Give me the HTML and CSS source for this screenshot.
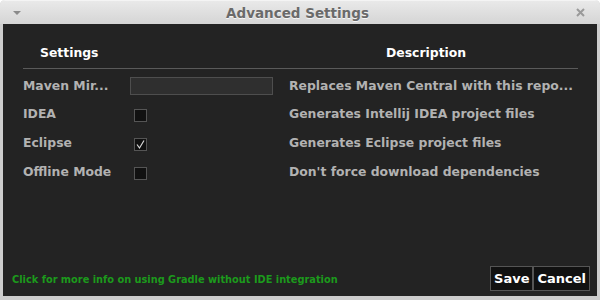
FILE: index.html
```html
<!DOCTYPE html>
<html lang="en">
<head>
  <meta charset="UTF-8" />
  <title>Advanced Settings</title>
  <link rel="stylesheet" href="styles.css">
</head>
<body>

  <div class="window">
    <!-- Title bar -->
    <div class="titlebar">
      <span class="menu-arrow"></span>
      <span class="title">Advanced Settings</span>
      <span class="close-btn">
        <svg width="9" height="9" viewBox="0 0 9 9"><path d="M1 1 L8 8 M8 1 L1 8" stroke="#9a9a9a" stroke-width="2"/></svg>
      </span>
    </div>

    <div class="content">
      <div class="table">
        <div class="head-row">
          <div class="head-settings">Settings</div>
          <div class="head-desc">Description</div>
        </div>

        <div class="row first">
          <div class="label">Maven Mir...</div>
          <div class="control"><div class="text-input"></div></div>
          <div class="desc">Replaces Maven Central with this repo...</div>
        </div>
        <div class="row">
          <div class="label">IDEA</div>
          <div class="control"><div class="checkbox"></div></div>
          <div class="desc">Generates Intellij IDEA project files</div>
        </div>
        <div class="row">
          <div class="label">Eclipse</div>
          <div class="control">
            <div class="checkbox">
              <svg width="11" height="11" viewBox="0 0 11 11"><path d="M2 5.5 L4.5 9 L9 1.5" fill="none" stroke="#d8d8d8" stroke-width="1.2"/></svg>
            </div>
          </div>
          <div class="desc">Generates Eclipse project files</div>
        </div>
        <div class="row">
          <div class="label">Offline Mode</div>
          <div class="control"><div class="checkbox"></div></div>
          <div class="desc">Don't force download dependencies</div>
        </div>
      </div>

      <div class="footer">
        <a class="info-link">Click for more info on using Gradle without IDE integration</a>
        <div class="buttons">
          <button class="btn">Save</button>
          <button class="btn">Cancel</button>
        </div>
      </div>
    </div>
  </div>

</body>
</html>
```

FILE: styles.css
```css
body {
  margin: 0;
  background-color: #ffffff;
  font-family: "DejaVu Sans", sans-serif;
  font-weight: bold;
}

.window {
  width: 600px;
  height: 300px;
  background-color: #cdcdcd;
  border-radius: 5px 5px 0 0;
  display: flex;
  flex-direction: column;
  overflow: hidden;
}

.titlebar {
  height: 24px;
  flex-shrink: 0;
  display: flex;
  align-items: center;
  background: linear-gradient(#e9e9e9, #d5d5d5);
  border-top: 1px solid #f4f4f4;
  box-sizing: border-box;
}

.menu-arrow {
  width: 0;
  height: 0;
  margin-left: 13px;
  margin-top: 1px;
  border-left: 4px solid transparent;
  border-right: 4px solid transparent;
  border-top: 4px solid #8a8a8a;
}

.title {
  flex: 1;
  text-align: center;
  font-size: 13.5px;
  color: #6a6a6a;
  text-shadow: 0 1px 0 #f5f5f5;
  margin-left: -2px;
}

.close-btn {
  margin-right: 15px;
  display: flex;
}

/* Dark dialog body */
.content {
  flex: 1;
  margin: 0 3px 4px 3px;
  background-color: #232323;
  display: flex;
  flex-direction: column;
}

.table {
  flex: 1;
  padding: 0 19px 0 20px;
  font-size: 12.4px;
}

.head-row {
  display: flex;
  padding-top: 21px;
  padding-bottom: 8px;
  border-bottom: 1px solid #5a5a5a;
  color: #ffffff;
}

.head-settings {
  width: 266px;
  padding-left: 17px;
  box-sizing: border-box;
}

.head-desc {
  padding-left: 97px;
}

.row {
  display: grid;
  grid-template-columns: 107px 159px 1fr;
  align-items: center;
  height: 28.6px;
  color: #b2b2b2;
}

.row.first {
  margin-top: 2px;
}

.control {
  display: flex;
}

.text-input {
  width: 141px;
  height: 16px;
  margin-top: 1px;
  border: 1px solid #4e4e4e;
  background-color: #2f2f2f;
}

.checkbox {
  width: 11px;
  height: 11px;
  margin-left: 4px;
  margin-top: 4px;
  border: 1px solid #555555;
  background-color: #111111;
  display: flex;
  align-items: center;
  justify-content: center;
}

.desc {
  white-space: nowrap;
}

.footer {
  display: flex;
  align-items: flex-end;
  justify-content: space-between;
  padding: 0 7px 5px 9px;
}

.info-link {
  font-size: 9.8px;
  color: #1c9a1c;
  margin-bottom: 6px;
  cursor: pointer;
}

.buttons {
  display: flex;
}

.btn {
  font-family: "DejaVu Sans", sans-serif;
  font-weight: bold;
  font-size: 13px;
  color: #ffffff;
  background-color: #111111;
  border: 1px solid #555555;
  height: 25px;
  padding: 0 3px;
  cursor: pointer;
}
```
